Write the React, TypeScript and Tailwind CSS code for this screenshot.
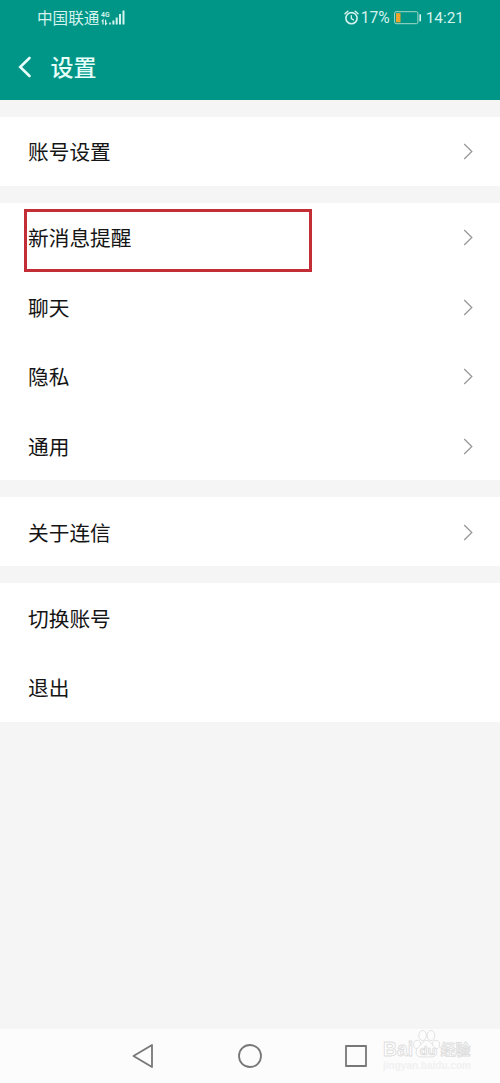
import React from "react";

const groups = [
  [{ label: "账号设置", arrow: true }],
  [
    { label: "新消息提醒", arrow: true, marked: true },
    { label: "聊天", arrow: true },
    { label: "隐私", arrow: true },
    { label: "通用", arrow: true },
  ],
  [{ label: "关于连信", arrow: true }],
  [{ label: "切换账号" }, { label: "退出" }],
];

const SignalIcon = () => (
  <svg width="25" height="18" viewBox="0 0 25 18" className="ml-[2px] text-[#d5f3ee]">
    <text
      x="0"
      y="7.5"
      fontSize="8"
      fontWeight="700"
      fontFamily="Roboto, sans-serif"
      textLength="8.500"
      lengthAdjust="spacingAndGlyphs"
      fill="currentColor"
    >
      4G
    </text>
    <path
      d="M2 15.500v-4.500L0.700 12.300M4.600 10.800v4.500L6 14"
      stroke="currentColor"
      strokeWidth="1.2"
      fill="none"
    />
    <path
      d="M8.200 13.600h1.600v1.900H8.200zM11.400 11.500h2v4h-2zM14.700 8.500h2v7h-2zM18 5h2v10.500h-2zM21.500 1.500h2v14h-2z"
      fill="currentColor"
    />
  </svg>
);

const AlarmIcon = () => (
  <svg width="15" height="16" viewBox="0 0 15 16" fill="none" stroke="#d5f3ee" strokeLinecap="round">
    <circle cx="7.5" cy="8.2" r="5.6" strokeWidth="1.6" />
    <path d="M7.3 5.6v3l2.200 1.300" strokeWidth="1.3" />
    <path d="M1 3.800L3.800 1.300M14 3.800L11.200 1.300" strokeWidth="1.5" />
  </svg>
);

const BatteryIcon = () => (
  <svg width="28" height="14" viewBox="0 0 28 14" fill="none">
    <rect x="0.6" y="0.7" width="23.3" height="12" rx="1.5" stroke="#a5d8c8" />
    <rect x="2" y="2.1" width="4.5" height="9.2" fill="#eda42d" />
    <path d="M26.200 3.3v7" stroke="#d5f3ee" strokeWidth="1.7" />
  </svg>
);

const StatusBar = () => (
  <div className="flex h-[35px] items-center pl-[37px] pr-[36px] text-[#d5f3ee]">
    <span className="-mt-[2px] text-[15.6px] leading-5">中国联通</span>
    <SignalIcon />
    <div className="ml-auto flex items-center font-['Roboto','Noto_Sans_CJK_SC',sans-serif] text-[16px] leading-5">
      <AlarmIcon />
      <span className="ml-[2px] mr-[4px] text-[15.6px]">17%</span>
      <BatteryIcon />
      <span className="ml-[4px] text-[15.4px]">14:21</span>
    </div>
  </div>
);

const Row = ({
  label,
  arrow,
  marked,
}: {
  label: string;
  arrow?: boolean;
  marked?: boolean;
}) => (
  <div className="relative flex h-[69.4px] items-center justify-between pl-[28px] pr-[26px]">
    <span className="text-[20.7px] leading-7 text-[#151515]">{label}</span>
    {arrow && (
      <svg width="11" height="18" viewBox="0 0 11 18" fill="none">
        <path d="M1.2 2L8.800 9.500L1.2 17" stroke="#999" strokeWidth="1.3" />
      </svg>
    )}
    {marked && (
      <div className="absolute left-[24px] top-[6px] h-[63px] w-[288px] border-[3px] border-[#c32d36]" />
    )}
  </div>
);

const Watermark = () => (
  <svg
    width="94"
    height="50"
    viewBox="0 0 94 50"
    className="absolute left-[380px] top-[-4px]"
    fontFamily="'Liberation Sans', 'Noto Sans CJK SC', sans-serif"
    fill="#fdfdfd"
    stroke="#dedede"
    strokeWidth="0.9"
  >
    <text x="3" y="31" fontSize="20" fontWeight="700" textLength="30" lengthAdjust="spacingAndGlyphs">
      Bai
    </text>
    <text x="60.500" y="30" fontSize="15" fontWeight="700" textLength="30" lengthAdjust="spacingAndGlyphs">
      经验
    </text>
    <ellipse cx="37.200" cy="19.500" rx="3.6" ry="4.2" />
    <ellipse cx="42.600" cy="10.500" rx="3.8" ry="5" />
    <ellipse cx="51" cy="10.500" rx="3.8" ry="5" />
    <ellipse cx="56" cy="19.500" rx="3.6" ry="4.2" />
    <path d="M46.500 15.500c3.500 0 5 4 8 6.500 3.500 3 3.500 9.500-2 9.800-3 .2-9 .2-12 0-5.500-.3-5.500-6.800-2-9.800C41.500 19.500 43 15.500 46.500 15.500z" />
    <text x="39.500" y="30" fontSize="13" fontWeight="700" fill="#fafafa" stroke="#d8d8d8" strokeWidth="0.7">
      du
    </text>
    <text x="3" y="44" fontSize="10" fontWeight="700" fill="#f1f1f1" stroke="none" textLength="88" lengthAdjust="spacingAndGlyphs">
      jingyan.baidu.com
    </text>
  </svg>
);

const NavBar = () => (
  <nav className="relative flex h-[54px] items-center bg-[#fcfcfc] pl-[131px]">
    <svg width="24" height="26" viewBox="0 0 24 26" fill="none" stroke="#777" strokeWidth="1.8" strokeLinejoin="round">
      <path d="M21 2v22L2.500 13z" />
    </svg>
    <svg width="26" height="26" viewBox="0 0 26 26" fill="none" stroke="#777" strokeWidth="1.8" className="ml-[82px]">
      <circle cx="13" cy="13" r="11" />
    </svg>
    <svg width="24" height="24" viewBox="0 0 24 24" fill="none" stroke="#777" strokeWidth="1.8" strokeLinejoin="round" className="ml-[81px]">
      <rect x="2" y="2" width="20" height="20" />
    </svg>
    <Watermark />
  </nav>
);

const App = () => {
  return (
    <div className="flex h-[1083px] w-[500px] flex-col overflow-hidden bg-[#f5f5f5] font-['Noto_Sans_CJK_SC',sans-serif]">
      <header className="h-[100px] bg-[#009687]">
        <StatusBar />
        <div className="flex h-[64px] items-center pl-[18px]">
          <svg width="14" height="22" viewBox="0 0 14 22" fill="none">
            <path d="M11.500 2L2.200 11l9.300 9" stroke="#e6fffa" strokeWidth="2.6" strokeLinecap="round" />
          </svg>
          <h1 className="-mt-[2px] ml-[18.5px] text-[23px] font-medium leading-8 text-[#e6fffa]">设置</h1>
        </div>
      </header>
      <main className="flex flex-1 flex-col gap-[16.7px] pt-[16.7px]">
        {groups.map((rows, i) => (
          <section key={i} className="bg-white">
            {rows.map((row) => (
              <Row key={row.label} {...row} />
            ))}
          </section>
        ))}
      </main>
      <NavBar />
    </div>
  );
};

export default App;
